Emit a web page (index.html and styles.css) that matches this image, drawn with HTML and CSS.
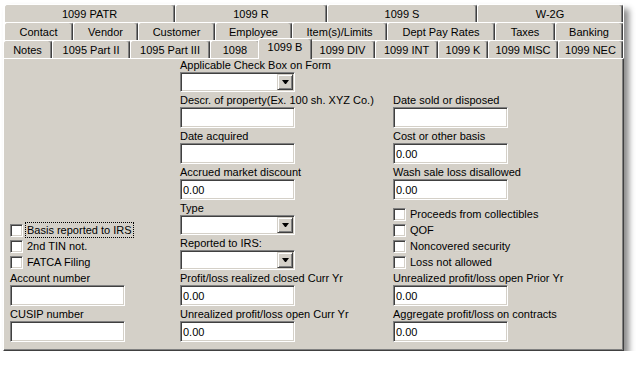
FILE: index.html
```html
<!DOCTYPE html>
<html lang="en">
<head>
    <meta charset="UTF-8">
    <title>1099 B</title>
    <link rel="stylesheet" href="styles.css">
</head>
<body>
<div class="window">
    <div class="tab-row back row-forms">
        <span class="tab">1099 PATR</span>
        <span class="tab">1099 R</span>
        <span class="tab">1099 S</span>
        <span class="tab">W-2G</span>
    </div>
    <div class="tab-row back row-people">
        <span class="tab">Contact</span>
        <span class="tab">Vendor</span>
        <span class="tab">Customer</span>
        <span class="tab">Employee</span>
        <span class="tab">Item(s)/Limits</span>
        <span class="tab">Dept Pay Rates</span>
        <span class="tab">Taxes</span>
        <span class="tab">Banking</span>
    </div>
    <div class="tab-row front row-tax">
        <span class="tab">Notes</span>
        <span class="tab">1095 Part II</span>
        <span class="tab">1095 Part III</span>
        <span class="tab">1098</span>
        <span class="tab active">1099 B</span>
        <span class="tab">1099 DIV</span>
        <span class="tab">1099 INT</span>
        <span class="tab">1099 K</span>
        <span class="tab">1099 MISC</span>
        <span class="tab">1099 NEC</span>
    </div>

    <div class="panel">
        <div class="field f-form">
            <label>Applicable Check Box on Form</label>
            <div class="combo"><span class="combo-btn"></span></div>
        </div>
        <div class="field f-desc">
            <label>Descr. of property(Ex. 100 sh. XYZ Co.)</label>
            <input class="text" type="text">
        </div>
        <div class="field f-sold">
            <label>Date sold or disposed</label>
            <input class="text" type="text">
        </div>
        <div class="field f-acq">
            <label>Date acquired</label>
            <input class="text" type="text">
        </div>
        <div class="field f-cost">
            <label>Cost or other basis</label>
            <input class="text" type="text" value="0.00">
        </div>
        <div class="field f-accr">
            <label>Accrued market discount</label>
            <input class="text" type="text" value="0.00">
        </div>
        <div class="field f-wash">
            <label>Wash sale loss disallowed</label>
            <input class="text" type="text" value="0.00">
        </div>

        <div class="checks f-lchk">
            <label class="check"><input type="checkbox"><span class="focus">Basis reported to IRS</span></label>
            <label class="check"><input type="checkbox"><span>2nd TIN not.</span></label>
            <label class="check"><input type="checkbox"><span>FATCA Filing</span></label>
        </div>
        <div class="field f-type">
            <label>Type</label>
            <div class="combo"><span class="combo-btn"></span></div>
        </div>
        <div class="field f-rep">
            <label>Reported to IRS:</label>
            <div class="combo"><span class="combo-btn"></span></div>
        </div>
        <div class="checks f-rchk">
            <label class="check"><input type="checkbox"><span>Proceeds from collectibles</span></label>
            <label class="check"><input type="checkbox"><span>QOF</span></label>
            <label class="check"><input type="checkbox"><span>Noncovered security</span></label>
            <label class="check"><input type="checkbox"><span>Loss not allowed</span></label>
        </div>

        <div class="field f-acct">
            <label>Account number</label>
            <input class="text" type="text">
        </div>
        <div class="field f-pl">
            <label>Profit/loss realized closed Curr Yr</label>
            <input class="text" type="text" value="0.00">
        </div>
        <div class="field f-upl">
            <label>Unrealized profit/loss open Prior Yr</label>
            <input class="text" type="text" value="0.00">
        </div>
        <div class="field f-cusip">
            <label>CUSIP number</label>
            <input class="text" type="text">
        </div>
        <div class="field f-ul">
            <label>Unrealized profit/loss open Curr Yr</label>
            <input class="text" type="text" value="0.00">
        </div>
        <div class="field f-agg">
            <label>Aggregate profit/loss on contracts</label>
            <input class="text" type="text" value="0.00">
        </div>
    </div>
</div>
</body>
</html>
```
FILE: styles.css
```css
:root {
    --face: #d4d0c8;
    --light: #ffffff;
    --shadow: #808080;
    --dark: #404040;
}

body {
    margin: 0;
    padding: 4px 0 0 3px;
    background: #ffffff;
    color: #000000;
    font-family: "Liberation Sans", Arial, sans-serif;
    font-size: 11px;
}

.window {
    width: 621px;
    box-shadow: 5px 5px 6px rgba(0, 0, 0, 0.45);
}

/* tab strip, three rows; widths as the tab control stretched them */
.tab-row {
    display: grid;
    height: 18px;
    margin: 0 1px 0 0;
}

.tab-row.back {
    margin-left: 1px;
}

.row-forms {
    grid-template-columns: 171px 152px 150px 1fr;
}

.row-people {
    grid-template-columns: 69px 65px 77px 77px 95px 108px 60px 1fr;
}

.row-tax {
    grid-template-columns: 49px 78px 80px 50px 50px 65px 63px 50px 70px 1fr;
}

.tab {
    box-sizing: border-box;
    height: 18px;
    padding: 1px 2px 0;
    border: 1px solid;
    border-bottom: 0;
    border-color: var(--light) var(--dark) transparent var(--light);
    border-radius: 3px 3px 0 0;
    box-shadow: inset -1px 0 var(--shadow);
    background: var(--face);
    line-height: 16px;
    text-align: center;
    white-space: nowrap;
    overflow: hidden;
}

.tab.active {
    position: relative;
    z-index: 1;
    height: 21px;
    margin: -2px -2px -1px;
    padding-top: 0;
}

/* page body */
.panel {
    display: grid;
    grid-template-columns: 170px 213px 1fr;
    grid-template-areas:
        ".     form  ."
        ".     desc  sold"
        ".     acq   cost"
        ".     accr  wash"
        "lchk  type  rchk"
        "lchk  rep   rchk"
        "acct  pl    upl"
        "cusip ul    agg";
    row-gap: 2px;
    padding: 0 0 8px 6px;
    background: var(--face);
    border: 1px solid;
    border-color: var(--light) var(--dark) var(--dark) var(--light);
    box-shadow: inset -1px -1px var(--shadow);
}

.f-form { grid-area: form; }
.f-desc { grid-area: desc; }
.f-sold { grid-area: sold; }
.f-acq { grid-area: acq; }
.f-cost { grid-area: cost; }
.f-accr { grid-area: accr; }
.f-wash { grid-area: wash; }
.f-lchk { grid-area: lchk; }
.f-type { grid-area: type; }
.f-rep { grid-area: rep; }
.f-rchk { grid-area: rchk; }
.f-acct { grid-area: acct; }
.f-pl { grid-area: pl; }
.f-upl { grid-area: upl; }
.f-cusip { grid-area: cusip; }
.f-ul { grid-area: ul; }
.f-agg { grid-area: agg; }

.field {
    display: flex;
    flex-direction: column;
    align-items: flex-start;
}

.field label {
    height: 13px;
    line-height: 13px;
    white-space: nowrap;
}

.text,
.combo {
    box-sizing: border-box;
    width: 115px;
    margin: 0;
    border: 1px solid;
    border-color: var(--shadow) var(--light) var(--light) var(--shadow);
    box-shadow: inset 1px 1px var(--dark), inset -1px -1px var(--face);
    background: #ffffff;
}

.text {
    height: 21px;
    padding: 0 1px 0 2px;
    font: inherit;
    color: #000000;
    outline: none;
}

.combo {
    display: flex;
    justify-content: flex-end;
    height: 20px;
    padding: 1px;
}

.combo-btn {
    display: flex;
    align-items: center;
    justify-content: center;
    box-sizing: border-box;
    width: 16px;
    height: 16px;
    background: var(--face);
    border: 1px solid;
    border-color: var(--face) var(--dark) var(--dark) var(--face);
    box-shadow: inset 1px 1px var(--light), inset -1px -1px var(--shadow);
}

.combo-btn:after {
    content: "";
    width: 1px;
    height: 0;
    border-top: 4px solid #000000;
    border-left: 3px solid transparent;
    border-right: 3px solid transparent;
}

/* checkbox groups sit at the bottom of their two rows */
.checks {
    align-self: end;
    display: flex;
    flex-direction: column;
}

.check {
    display: flex;
    align-items: center;
    height: 16px;
    white-space: nowrap;
}

.check input {
    appearance: none;
    box-sizing: border-box;
    width: 13px;
    height: 13px;
    margin: 0 4px 0 0;
    border: 1px solid;
    border-color: var(--shadow) var(--light) var(--light) var(--shadow);
    box-shadow: inset 1px 1px var(--dark), inset -1px -1px var(--face);
    background: #ffffff;
}

.focus {
    padding: 0 1px;
    margin-left: -1px;
    line-height: 14px;
    outline: 1px dotted #000000;
}
```
